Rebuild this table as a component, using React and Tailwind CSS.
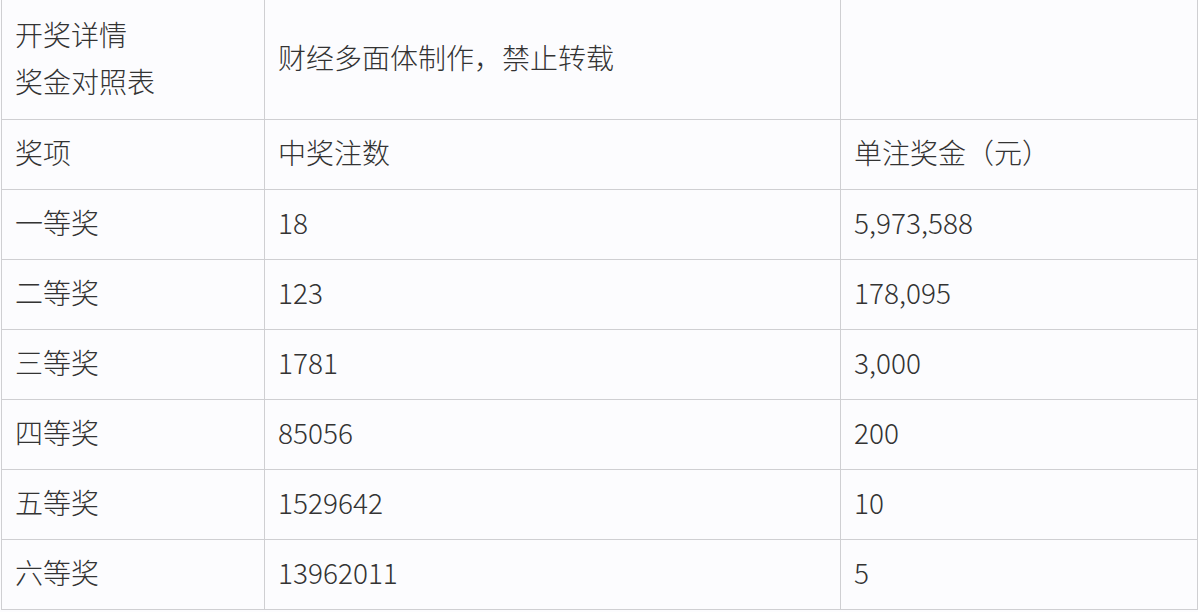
const ROWS = [
  ["奖项", "中奖注数", "单注奖金（元）"],
  ["一等奖", "18", "5,973,588"],
  ["二等奖", "123", "178,095"],
  ["三等奖", "1781", "3,000"],
  ["四等奖", "85056", "200"],
  ["五等奖", "1529642", "10"],
  ["六等奖", "13962011", "5"],
];

const cell = "border border-[#cfcfd2] pl-[13px] pr-2 pb-[3px] align-middle";

export default function App() {
  return (
    <div
      className="h-[612px] w-[1198px] overflow-hidden bg-[#fcfcfe] text-[28px] font-light leading-[1.7] text-[#333]"
      style={{ fontFamily: '"Noto Sans CJK SC", "Noto Sans", sans-serif' }}
    >
      <table className="ml-px mt-[-1px] w-[1196px] table-fixed border-collapse">
        <colgroup>
          <col className="w-[263px]" />
          <col className="w-[576px]" />
          <col className="w-[357px]" />
        </colgroup>
        <tbody>
          <tr className="h-[120px]">
            <td className={cell}>
              <div className="leading-[47px]">开奖详情</div>
              <div className="leading-[47px]">奖金对照表</div>
            </td>
            <td className={cell}>财经多面体制作，禁止转载</td>
            <td className={cell}></td>
          </tr>
          {ROWS.map((r) => (
            <tr key={r[0]} className="h-[70px]">
              {r.map((c, i) => (
                <td key={i} className={cell}>
                  {c}
                </td>
              ))}
            </tr>
          ))}
        </tbody>
      </table>
    </div>
  );
}
